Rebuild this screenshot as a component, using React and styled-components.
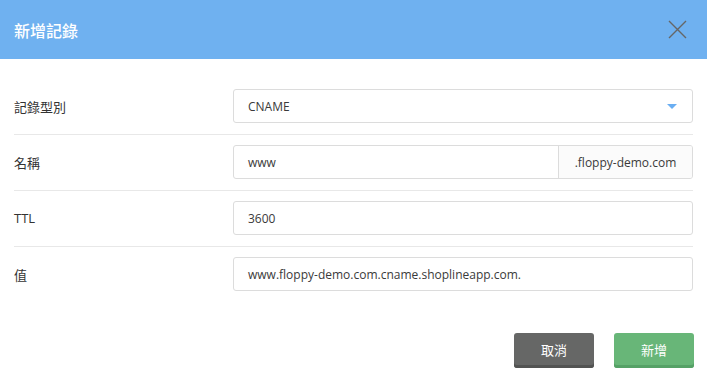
import React from "react";
import styled, { createGlobalStyle } from "styled-components";

const Global = createGlobalStyle`
  html, body { margin: 0; padding: 0; background: #fff; }
  body { font-family: "Open Sans", "Noto Sans CJK TC", sans-serif; color: #333; }
  * { box-sizing: border-box; }
`;

const Dialog = styled.div`
  width: 707px;
  height: 372px;
  background: #fff;
  display: flex;
  flex-direction: column;
`;

const Header = styled.div`
  height: 59px;
  background: #6fb1f0;
  display: flex;
  align-items: center;
  justify-content: space-between;
  padding: 0 20px 0 14px;
`;

const Title = styled.h2`
  margin: 0;
  font-size: 16px;
  font-weight: 500;
  color: #fff;
  font-family: "Noto Sans CJK TC", sans-serif;
  padding-top: 1px;
`;

const CloseButton = styled.button`
  border: 0;
  background: none;
  padding: 0;
  width: 20px;
  height: 20px;
  display: flex;
  align-items: center;
  justify-content: center;
  cursor: pointer;
`;

const Body = styled.div`
  padding: 20px 14px 0;
`;

const Row = styled.div`
  display: grid;
  grid-template-columns: 219px 1fr;
  align-items: center;
  padding: 10px 0 11px;
  border-bottom: ${(p) => (p.$last ? "none" : "1px solid #e8e8e8")};
`;

const Label = styled.label`
  font-size: 13px;
  color: #333;
  font-family: "Open Sans", "Noto Sans CJK TC", sans-serif;
`;

const Field = styled.div`
  position: relative;
  height: 34px;
  border: 1px solid #dcdcdc;
  border-radius: 3px;
  display: flex;
  align-items: stretch;
  overflow: hidden;
  background: #fff;
`;

const Value = styled.div`
  flex: 1;
  display: flex;
  align-items: center;
  padding: 0 14px;
  font-size: 12px;
  color: #3a3a3a;
`;

const Addon = styled.div`
  width: 134px;
  display: flex;
  align-items: center;
  justify-content: center;
  border-left: 1px solid #dcdcdc;
  background: #fbfbfb;
  font-size: 12px;
  color: #3a3a3a;
`;

const Caret = styled.span`
  position: absolute;
  right: 15px;
  top: 14px;
  width: 0;
  height: 0;
  border-left: 5px solid transparent;
  border-right: 5px solid transparent;
  border-top: 5px solid #6aaef2;
`;

const Footer = styled.div`
  display: flex;
  justify-content: flex-end;
  gap: 20px;
  padding: 31px 13px 0;
`;

const Button = styled.button`
  width: 80px;
  height: 35px;
  border: 0;
  border-radius: 3px;
  background: ${(p) => p.$bg};
  box-shadow: inset 0 -3px 0 ${(p) => p.$shade};
  color: #fff;
  font-size: 13px;
  font-family: "Noto Sans CJK TC", sans-serif;
  padding: 0 0 2px;
  cursor: pointer;
`;

export default function App() {
  return (
    <>
      <Global />
      <Dialog>
        <Header>
          <Title>新增記錄</Title>
          <CloseButton aria-label="close">
            <svg width="19" height="19" viewBox="0 0 19 19">
              <path d="M1 1L18 18M18 1L1 18" stroke="#666" strokeWidth="1.4" fill="none" />
            </svg>
          </CloseButton>
        </Header>
        <Body>
          <Row>
            <Label>記錄型別</Label>
            <Field>
              <Value>CNAME</Value>
              <Caret />
            </Field>
          </Row>
          <Row>
            <Label>名稱</Label>
            <Field>
              <Value>www</Value>
              <Addon>.floppy-demo.com</Addon>
            </Field>
          </Row>
          <Row>
            <Label>TTL</Label>
            <Field>
              <Value>3600</Value>
            </Field>
          </Row>
          <Row $last>
            <Label>值</Label>
            <Field>
              <Value>www.floppy-demo.com.cname.shoplineapp.com.</Value>
            </Field>
          </Row>
        </Body>
        <Footer>
          <Button $bg="#666766" $shade="#525352">取消</Button>
          <Button $bg="#68b678" $shade="#55a166">新增</Button>
        </Footer>
      </Dialog>
    </>
  );
}
